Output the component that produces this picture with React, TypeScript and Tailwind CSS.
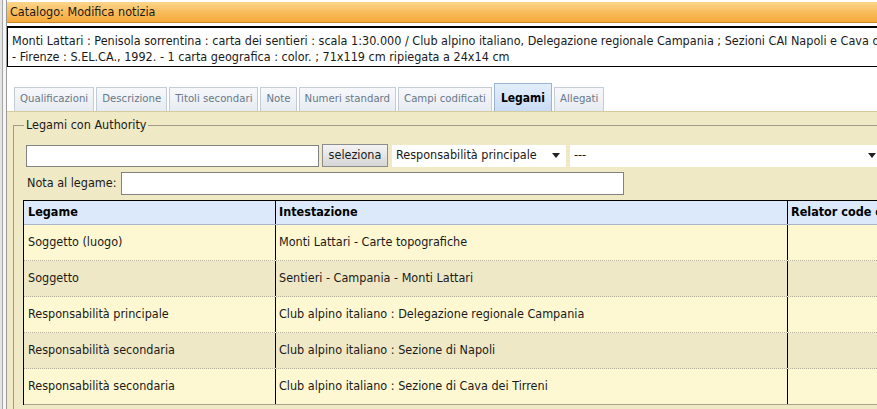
import React from "react";

const font = "font-['DejaVu_Sans_Condensed','DejaVu_Sans',sans-serif]";

const tabs = [
  "Qualificazioni",
  "Descrizione",
  "Titoli secondari",
  "Note",
  "Numeri standard",
  "Campi codificati",
  "Legami",
  "Allegati",
];

const rows = [
  { legame: "Soggetto (luogo)", intestazione: "Monti Lattari - Carte topografiche" },
  { legame: "Soggetto", intestazione: "Sentieri - Campania - Monti Lattari" },
  { legame: "Responsabilità principale", intestazione: "Club alpino italiano : Delegazione regionale Campania" },
  { legame: "Responsabilità secondaria", intestazione: "Club alpino italiano : Sezione di Napoli" },
  { legame: "Responsabilità secondaria", intestazione: "Club alpino italiano : Sezione di Cava dei Tirreni" },
];

function Arrow() {
  return (
    <svg width="8" height="5" viewBox="0 0 8 5" className="shrink-0">
      <path d="M0 0h8L4 5z" fill="#222" />
    </svg>
  );
}

export default function App() {
  return (
    <div className={`w-[877px] h-[409px] overflow-hidden bg-white flex text-[12.5px] text-[#1a1a1a] ${font}`}>
      {/* window frame */}
      <div className="w-[7px] shrink-0 flex bg-[#f2f2f2]">
        <div className="w-[2px] bg-[#e4e4e4]" />
        <div className="w-px bg-[#a6a6a6]" />
        <div className="w-[3px] bg-[#f6f6f6]" />
        <div className="w-px bg-[#9a9a9a]" />
      </div>

      <div className="flex-1 min-w-0 flex flex-col">
        {/* title bar */}
        <div className="mt-[2px] h-[21px] shrink-0 flex items-center px-[3px] bg-gradient-to-b from-[#fcd68c] via-[#f9bd5c] to-[#f5a93c] border-b border-[#c98a2a] whitespace-nowrap">
          Catalogo: Modifica notizia
        </div>

        {/* description */}
        <div className="mt-[3px] w-[1000px] h-[41px] shrink-0 border border-black border-t-2 px-[4px] pt-[5px] leading-[16px] whitespace-nowrap">
          <div>
            Monti Lattari : Penisola sorrentina : carta dei sentieri : scala 1:30.000 / Club alpino italiano, Delegazione regionale Campania ; Sezioni CAI Napoli e Cava dei Tirreni
          </div>
          <div>- Firenze : S.EL.CA., 1992. - 1 carta geografica : color. ; 71x119 cm ripiegata a 24x14 cm</div>
        </div>

        {/* tabs */}
        <div className="mt-[16px] h-[28px] shrink-0 flex items-end pl-[7px] gap-[2px]">
          {tabs.map((t) =>
            t === "Legami" ? (
              <div
                key={t}
                className="h-[28px] px-[6px] flex items-center text-[12px] font-bold text-black border border-b-0 border-[#9db4d0] bg-gradient-to-b from-[#e3eefb] to-[#c9dcf4] whitespace-nowrap"
              >
                {t}
              </div>
            ) : (
              <div
                key={t}
                className="h-[24px] px-[5px] flex items-center text-[11.3px] text-[#6a7888] border border-b-0 border-[#c3ccd6] bg-gradient-to-b from-[#f6f8fb] to-[#e7ecf2] whitespace-nowrap"
              >
                {t}
              </div>
            )
          )}
        </div>

        {/* content panel */}
        <div className="flex-1 min-h-0 bg-[#efe9c6] border-t border-[#d4cca0] pl-[6px] pt-[13px]">
          <div className="relative w-[1000px] border border-[#a09a88] border-r-0 pt-[18px] pl-[9px] h-[400px]">
            <div className="absolute left-[10px] top-[-9px] px-[2px] bg-[#efe9c6] leading-[16px] whitespace-nowrap">
              Legami con Authority
            </div>

            {/* search row */}
            <div className="flex items-center h-[23px] pl-[3px]">
              <div className="w-[293px] h-[22px] bg-white border border-[#828282]" />
              <div className="ml-[3px] w-[66px] h-[23px] flex items-center justify-center border border-[#8c8c8c] bg-gradient-to-b from-[#f4f4f4] to-[#d6d6d6] whitespace-nowrap">
                seleziona
              </div>
              <div className="ml-[4px] w-[174px] h-[22px] bg-white flex items-center justify-between px-[4px] whitespace-nowrap">
                <span>Responsabilità principale</span>
                <span className="mr-[2px]"><Arrow /></span>
              </div>
              <div className="ml-[4px] w-[312px] h-[22px] bg-white flex items-center justify-between px-[4px]">
                <span>---</span>
                <span className="mr-[2px]"><Arrow /></span>
              </div>
            </div>

            {/* note row */}
            <div className="mt-[5px] flex items-center h-[23px] pl-[4px]">
              <span className="w-[94px] shrink-0 whitespace-nowrap">Nota al legame:</span>
              <div className="w-[503px] h-[23px] bg-white border border-[#828282]" />
            </div>

            {/* table */}
            <div className="mt-[5px] w-[980px] border-l border-t border-black">
              <div className="grid grid-cols-[251px_512px_217px] h-[24px] bg-[#dce9fb] border-b border-[#a8b8c8] font-bold text-black">
                <div className="flex items-center px-[4px]">Legame</div>
                <div className="flex items-center px-[3px] border-l border-black">Intestazione</div>
                <div className="flex items-center px-[3px] border-l border-black whitespace-nowrap">Relator code e ruolo</div>
              </div>
              {rows.map((r, i) => (
                <div
                  key={i}
                  className={`grid grid-cols-[251px_512px_217px] h-[36px] ${
                    i % 2 === 0 ? "bg-[#fdf8d2]" : "bg-[#efe8c6]"
                  } ${i < rows.length - 1 ? "border-b border-dotted border-[#b8b2a0]" : "border-b border-[#a8a290]"}`}
                >
                  <div className="flex items-center px-[4px] whitespace-nowrap">{r.legame}</div>
                  <div className="flex items-center px-[3px] border-l border-black whitespace-nowrap">{r.intestazione}</div>
                  <div className="border-l border-black" />
                </div>
              ))}
            </div>
          </div>
        </div>
      </div>
    </div>
  );
}
